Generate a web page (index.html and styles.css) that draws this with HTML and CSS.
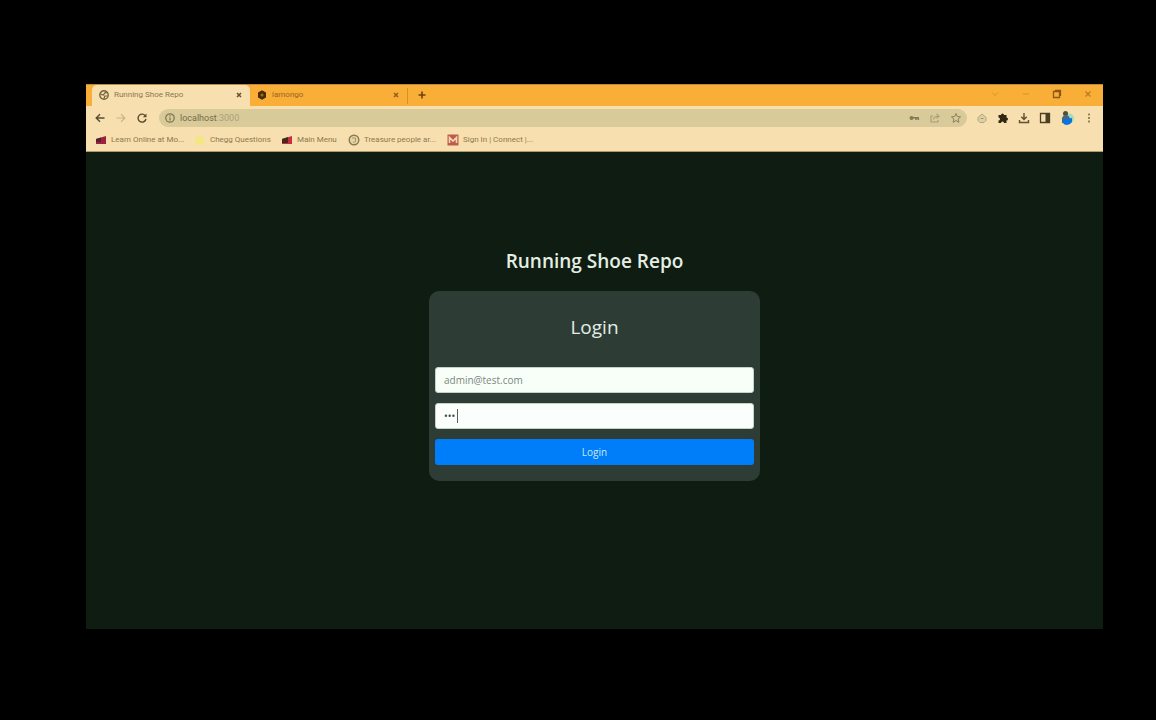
FILE: index.html
```html
<!DOCTYPE html>
<html lang="en">
<head>
<meta charset="utf-8">
<title>Running Shoe Repo</title>
<link rel="stylesheet" href="styles.css">
</head>
<body>
<div class="window">
  <header class="chrome">
    <div class="tabs">
      <div class="tab tab-active">
        <svg class="icon" viewBox="0 0 12 12"><circle cx="6" cy="6" r="4.2" fill="none" stroke="#75643f" stroke-width="1.4"/><path d="M2.5 5.2 5.3 6 7.2 3.5 9.4 4M6 9.8 6.7 7 9.5 7" fill="none" stroke="#75643f" stroke-width="1.2"/></svg>
        <span class="tab-title">Running Shoe Repo</span>
        <button class="icon-button" aria-label="Close tab"><svg class="icon" viewBox="0 0 12 12"><path d="M4 4l4 4M8 4 4 8" stroke="#65542f" stroke-width="1.6"/></svg></button>
      </div>
      <div class="tab">
        <svg class="icon" viewBox="0 0 12 12"><path d="M6 1.2 10 3.5v5L6 10.8 2 8.500v-5z" fill="#4b2b08"/><circle cx="6" cy="6" r="1.5" fill="#a66b1c"/></svg>
        <span class="tab-title tab-title-dim">lamongo</span>
        <button class="icon-button" aria-label="Close tab"><svg class="icon" viewBox="0 0 12 12"><path d="M4 4l4 4M8 4 4 8" stroke="#97601a" stroke-width="1.6"/></svg></button>
      </div>
      <button class="icon-button new-tab" aria-label="New tab"><svg class="icon" viewBox="0 0 12 12"><path d="M6 2.500v7M2.500 6h7" stroke="#70420c" stroke-width="1.6"/></svg></button>
      <div class="window-controls">
        <button class="icon-button" aria-label="Search tabs"><svg class="icon" viewBox="0 0 12 12"><path d="M3 4.500 6 7.500 9 4.500" fill="none" stroke="#d8922b"/></svg></button>
        <button class="icon-button" aria-label="Minimize"><svg class="icon" viewBox="0 0 12 12"><path d="M3 6h6" stroke="#d8922b"/></svg></button>
        <button class="icon-button" aria-label="Restore"><svg class="icon" viewBox="0 0 12 12"><path d="M2.500 3.500h6v6h-6zM4 2.500h5.500V8" fill="none" stroke="#8b5815" stroke-width="1.3"/></svg></button>
        <button class="icon-button" aria-label="Close window"><svg class="icon" viewBox="0 0 12 12"><path d="M3.500 3.500l5 5M8.500 3.500l-5 5" stroke="#bb7a20" stroke-width="1.2"/></svg></button>
      </div>
    </div>
    <div class="toolbar">
      <div class="nav">
        <button class="icon-button" aria-label="Back"><svg class="icon" viewBox="0 0 12 12"><path d="M10.500 6h-8M6 2.200 2.200 6 6 9.800" fill="none" stroke="#594d31" stroke-width="1.4"/></svg></button>
        <button class="icon-button" aria-label="Forward"><svg class="icon" viewBox="0 0 12 12"><path d="M1.500 6h8M6 2.200 9.800 6 6 9.800" fill="none" stroke="#c5b384" stroke-width="1.2"/></svg></button>
        <button class="icon-button" aria-label="Reload"><svg class="icon" viewBox="0 0 12 12"><path d="M9.500 4A4 4 0 1 0 10 7" fill="none" stroke="#594d31" stroke-width="1.4"/><path d="M10.500 1.500v3.700H6.800z" fill="#594d31"/></svg></button>
      </div>
      <div class="address">
        <svg class="icon" viewBox="0 0 12 12"><circle cx="6" cy="6" r="4.200" fill="none" stroke="#81764f" stroke-width="1.3"/><path d="M6 5.400V8.500M6 3.300v1.200" stroke="#81764f" stroke-width="1.3"/></svg>
        <span class="url">localhost<span class="port">:3000</span></span>
        <div class="address-actions">
          <svg class="icon" viewBox="0 0 12 12"><circle cx="3.500" cy="6" r="2" fill="#847a56"/><path d="M4 5.800h7M8 6v2M10.300 6v2" stroke="#847a56" stroke-width="1.600"/></svg>
          <svg class="icon" viewBox="0 0 12 12"><path d="M4 4H2v6h7V8M4.500 7.500C5 5 6.500 4.200 9 4.200M7.500 2 10 4.200 7.500 6.300" fill="none" stroke="#a99d73" stroke-width="1.100"/></svg>
          <svg class="icon" viewBox="0 0 12 12"><path d="M6 1.500 7.300 4.600l3.300.2L8.100 7l.8 3.300L6 8.500l-2.900 1.800L3.900 7 1.400 4.800l3.300-.2z" fill="none" stroke="#8c815b"/></svg>
        </div>
      </div>
      <div class="extensions">
        <button class="icon-button" aria-label="Extension"><svg class="icon" viewBox="0 0 12 12"><path d="M2 5.500 6 2l4 3.500v3L8 10.500H4l-2-2z" fill="#ded0a2" stroke="#b0a67c"/><path d="M4.500 6.500h3" stroke="#989985"/></svg></button>
        <button class="icon-button" aria-label="Extensions"><svg class="icon" viewBox="0 0 12 12"><path d="M1.500 3H4a1.500 1.500 0 0 1 3 0h2.500v2.500a1.500 1.500 0 0 1 0 3V11H7a1.500 1.500 0 0 0-3 0H1.500V8.500a1.500 1.500 0 0 0 0-3z" fill="#302811"/></svg></button>
        <button class="icon-button" aria-label="Downloads"><svg class="icon" viewBox="0 0 12 12"><path d="M6 1v6M3.300 4.800 6 7.500l2.700-2.700M1.500 8v2.500h9V8" fill="none" stroke="#5d5030" stroke-width="1.400"/></svg></button>
        <button class="icon-button" aria-label="Side panel"><svg class="icon" viewBox="0 0 12 12"><path d="M1.500 1.500h9v9h-9z" fill="none" stroke="#4b4024" stroke-width="1.300"/><path d="M6.500 1.500h4v9h-4z" fill="#4b4024"/></svg></button>
        <button class="icon-button" aria-label="Profile"><svg class="icon icon-profile" viewBox="0 0 14 16"><circle cx="9" cy="8.500" r="5" fill="#a3dcbc"/><circle cx="5.500" cy="3.500" r="2.500" fill="#554d32"/><path d="M2 8q1-3 4-3t4 4L9 13H2z" fill="#426985"/><path d="M3 10l3-1 6-1v4q-2 3-5 3t-4-2z" fill="#0874dc"/></svg></button>
        <button class="icon-button" aria-label="Menu"><svg class="icon" viewBox="0 0 12 12"><path d="M6 1.500v2M6 5v2M6 8.500v2" stroke="#76673f" stroke-width="1.500"/></svg></button>
      </div>
    </div>
    <nav class="bookmarks" aria-label="Bookmarks">
      <a href="#"><svg class="icon" viewBox="0 0 12 12"><path d="M1 5 6 3.500 11 2v8H1z" fill="#9b2342"/><path d="M1 5l5-1.500V8H1z" fill="#57222f"/></svg>Learn Online at Mo...</a>
      <a href="#"><svg class="icon" viewBox="0 0 12 12"><path d="M1.500 2.500 10 3.500v7H1.500z" fill="#f3e780"/></svg>Chegg Questions</a>
      <a href="#"><svg class="icon" viewBox="0 0 12 12"><path d="M1 5 6 3.500 11 2v8H1z" fill="#c33140"/><path d="M1 5l6-2v6H1z" fill="#46291c"/></svg>Main Menu</a>
      <a href="#"><svg class="icon" viewBox="0 0 12 12"><circle cx="6" cy="6" r="4.800" fill="#e5d5a5" stroke="#897a51" stroke-width="1.400"/><path d="M4 4h3.500v3.500L5 8.500" fill="none" stroke="#a89768"/></svg>Treasure people ar...</a>
      <a href="#"><svg class="icon" viewBox="0 0 12 12"><path d="M.5.500h11v11H.5z" fill="#bc5c4b"/><path d="M2.500 9V3.500L6 7l3.500-3.500V9" fill="none" stroke="#f7d6b3" stroke-width="1.600"/></svg>Sign In | Connect |...</a>
    </nav>
  </header>
  <main class="page">
    <h1 class="site-title">Running Shoe Repo</h1>
    <form class="card">
      <h2 class="card-title">Login</h2>
      <input class="field" type="email" placeholder="admin@test.com" aria-label="Email">
      <div class="password">
        <input class="field field-password" type="password" value="123" aria-label="Password">
      </div>
      <button class="submit" type="button">Login</button>
    </form>
  </main>
</div>
</body>
</html>
```
FILE: styles.css
```css
* { box-sizing: border-box; }

body {
  margin: 0;
  min-height: 100vh;
  padding: 84px 53px 91px 86px;
  display: flex;
  background: #000;
  font-family: "Open Sans", "Noto Sans", sans-serif;
}

button {
  font: inherit;
  border: 0;
  padding: 0;
  background: none;
}

.window {
  flex: 1;
  min-width: 0;
  display: flex;
  flex-direction: column;
  background: #0f1c11;
}

.chrome {
  background: #f8dfaf;
  border-bottom: 1px solid #ad996b;
  color: #8c794e;
  font-family: Roboto, "Liberation Sans", sans-serif;
  font-size: 8px;
  line-height: 12px;
}

.icon {
  display: block;
  flex: none;
  width: 12px;
  height: 12px;
}

.icon-profile {
  width: 14px;
  height: 16px;
}

.icon-button {
  flex: none;
  display: flex;
  align-items: center;
}

.tabs {
  display: flex;
  align-items: center;
  height: 22px;
  padding-left: 6px;
  background: #f9ae38;
  border-top: 1px solid #b88b3d;
}

.tab {
  display: flex;
  align-items: center;
  gap: 4px;
  width: 158px;
  height: 21px;
  padding: 0 5px 2px 6px;
}

.tab + .tab {
  height: 16px;
  border-right: 1px solid #d98e2c;
}

.tab-active {
  background: #f8dfaf;
  border-radius: 5px 5px 0 0;
}

.tab-title {
  flex: 1;
}

.tab-title-dim {
  color: #9b641d;
}

.new-tab {
  margin-left: 8px;
  padding-bottom: 2px;
}

.window-controls {
  display: flex;
  gap: 19px;
  margin-left: auto;
  padding: 0 9px 4px 0;
}

.toolbar {
  display: flex;
  align-items: center;
  height: 24px;
  padding: 0 8px;
}

.nav {
  display: flex;
  gap: 9px;
  margin-right: 11px;
}

.address {
  flex: 1;
  display: flex;
  align-items: center;
  gap: 4px;
  height: 18px;
  padding: 0 5px;
  border-radius: 9px;
  background: #d9ca9a;
}

.url {
  color: #776c48;
  font-size: 9px;
}

.port {
  color: #aea077;
}

.address-actions {
  display: flex;
  gap: 9px;
  margin-left: auto;
}

.extensions {
  display: flex;
  align-items: center;
  gap: 9px;
  margin-left: 9px;
}

.bookmarks {
  display: grid;
  grid-template-columns: 99px 87px 67px 99px auto;
  align-items: center;
  height: 21px;
  padding: 0 9px 2px;
}

.bookmarks a {
  display: flex;
  align-items: center;
  gap: 4px;
  color: inherit;
  text-decoration: none;
  white-space: nowrap;
}

.page {
  display: flex;
  flex-direction: column;
  align-items: center;
  padding: 95px 16px 16px;
  color: #e3efe4;
}

.site-title {
  margin: 0 0 16px;
  font-size: 19px;
  font-weight: 600;
  line-height: 28px;
}

.card {
  display: flex;
  flex-direction: column;
  gap: 10px;
  width: 100%;
  max-width: 331px;
  padding: 20px 6px 16px;
  border-radius: 10px;
  background: #2d3c34;
}

.card-title {
  margin: 0 0 14px;
  font-size: 19px;
  font-weight: 400;
  line-height: 32px;
  text-align: center;
}

.field {
  display: block;
  width: 100%;
  height: 26px;
  padding: 0 8px;
  border: 1px solid #c5d2c8;
  border-radius: 3px;
  background: #f8fff8;
  color: #38433c;
  font-family: inherit;
  font-size: 10px;
}

.field::placeholder {
  color: #7b867e;
  opacity: 1;
}

.password {
  position: relative;
}

.field-password {
  background: #fafffd;
}

/* Text caret after the typed password */
.password::after {
  content: "";
  position: absolute;
  top: 6px;
  left: 22px;
  width: 1px;
  height: 14px;
  background: #59635c;
}

.submit {
  height: 26px;
  border-radius: 3px;
  background: #007df8;
  color: #c9e9fa;
  font-size: 10px;
}
```
